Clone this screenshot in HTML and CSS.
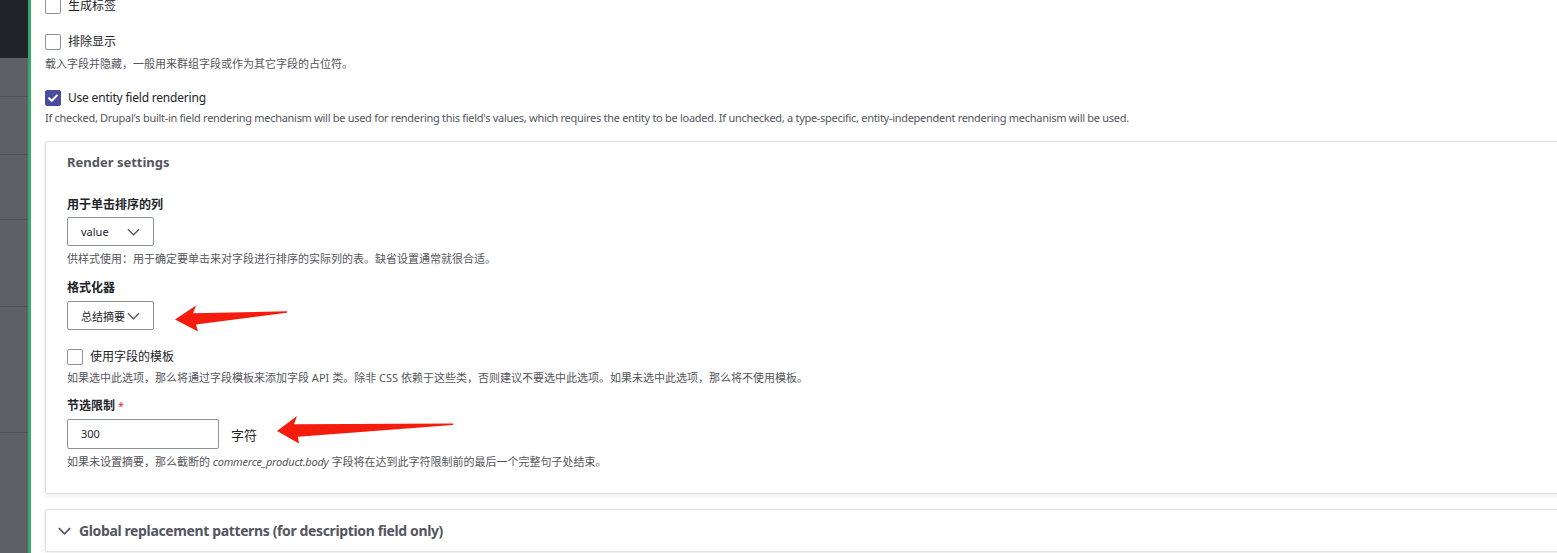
FILE: index.html
```html
<!DOCTYPE html>
<html lang="zh-CN">
<head>
<meta charset="utf-8">
<title>Render settings</title>
<link rel="stylesheet" href="styles.css">
</head>
<body>
<div class="page">
  <aside class="sidebar">
    <div class="sb-top"></div>
    <div class="sb-item h1"></div>
    <div class="sb-item h2"></div>
    <div class="sb-item h3"></div>
    <div class="sb-item h4"></div>
    <div class="sb-item h5"></div>
    <div class="sb-rest"></div>
  </aside>
  <div class="accent"></div>
  <main class="content">
    <div class="check-row first">
      <span class="cb"></span><span class="cb-label">生成标签</span>
    </div>
    <div class="check-row row2">
      <span class="cb"></span><span class="cb-label">排除显示</span>
    </div>
    <div class="desc d1">载入字段并隐藏，一般用来群组字段或作为其它字段的占位符。</div>
    <div class="check-row row3">
      <span class="cb checked"><svg viewBox="0 0 16 16" width="16" height="16"><path d="M4 8.2 L6.8 10.8 L12 5.4" fill="none" stroke="#fff" stroke-width="2" stroke-linecap="round" stroke-linejoin="round"/></svg></span><span class="cb-label latin">Use entity field rendering</span>
    </div>
    <div class="desc d2 latin-desc">If checked, Drupal's built-in field rendering mechanism will be used for rendering this field's values, which requires the entity to be loaded. If unchecked, a type-specific, entity-independent rendering mechanism will be used.</div>

    <section class="panel">
      <h3 class="panel-title">Render settings</h3>

      <div class="label l1">用于单击排序的列</div>
      <div class="select s1"><span>value</span><svg class="chev" viewBox="0 0 14 8" width="13" height="8"><path d="M1 1 L7 7 L13 1" fill="none" stroke="#545560" stroke-width="1.3"/></svg></div>
      <div class="desc pd">供样式使用：用于确定要单击来对字段进行排序的实际列的表。缺省设置通常就很合适。</div>

      <div class="label l2">格式化器</div>
      <div class="select s2"><span>总结摘要</span><svg class="chev" viewBox="0 0 14 8" width="13" height="8"><path d="M1 1 L7 7 L13 1" fill="none" stroke="#545560" stroke-width="1.3"/></svg></div>

      <div class="check-row row4">
        <span class="cb"></span><span class="cb-label">使用字段的模板</span>
      </div>
      <div class="desc pd">如果选中此选项，那么将通过字段模板来添加字段 API 类。除非 CSS 依赖于这些类，否则建议不要选中此选项。如果未选中此选项，那么将不使用模板。</div>

      <div class="label l3">节选限制 <span class="req">*</span></div>
      <div class="input-row">
        <div class="input">300</div>
        <span class="suffix">字符</span>
      </div>
      <div class="desc pd">如果未设置摘要，那么截断的 <em>commerce_product.body</em> 字段将在达到此字符限制前的最后一个完整句子处结束。</div>
    </section>

    <section class="panel panel2">
      <svg class="chev2" viewBox="0 0 14 8" width="13" height="8"><path d="M1 1 L7 7 L13 1" fill="none" stroke="#545560" stroke-width="1.8"/></svg>
      <span class="panel2-title">Global replacement patterns (for description field only)</span>
    </section>
  </main>

  <svg class="arrows" viewBox="0 0 1557 553" width="1557" height="553">
    <polygon points="175,319.5 196,305.5 193,313.3 287,311.2 287,312.8 196,324.5 198,331.5" fill="#f41d0d"/>
    <polygon points="277,431 297,416 294,424.2 453,423.4 453,425 298,436.8 299,443.5" fill="#f41d0d"/>
  </svg>
</div>
</body>
</html>
```

FILE: styles.css
```css
html, body {
  margin: 0;
  padding: 0;
  background: #fff;
  overflow: hidden;
}
body {
  font-family: "Noto Sans", "Noto Sans CJK SC", sans-serif;
  color: #232429;
}
.page {
  position: relative;
  display: flex;
  height: 553px;
  overflow: hidden;
}
.sidebar {
  width: 28px;
  flex: none;
  display: flex;
  flex-direction: column;
  background: #5f6065;
}
.sb-top { height: 58px; background: #232429; }
.sb-item { border-bottom: 1px solid #505156; box-sizing: border-box; }
.h1 { height: 39px; }
.h2 { height: 58px; }
.h3 { height: 65px; }
.h4 { height: 87px; }
.h5 { height: 126px; }
.sb-rest { flex: 1; }
.accent { width: 3px; flex: none; background: #35a96b; }
.content {
  flex: 1;
  min-width: 0;
  padding-left: 14px;
}
.check-row {
  display: flex;
  align-items: center;
  gap: 7px;
  height: 16px;
  font-size: 12px;
  line-height: 16px;
}
.latin { letter-spacing: -0.2px; }
.cb {
  width: 16px;
  height: 16px;
  box-sizing: border-box;
  border: 1px solid #8e929c;
  border-radius: 2px;
  background: #fff;
  flex: none;
  display: flex;
}
.cb.checked {
  background: #4a4c9e;
  border-color: #4a4c9e;
}
.cb.checked svg { margin: -1px; }
.first { margin-top: -2px; }
.row2 { margin-top: 20px; }
.row3 { margin-top: 18px; }
.row4 { margin-top: 19px; }
.desc {
  font-size: 11px;
  line-height: 16px;
  color: #55565b;
  white-space: nowrap;
}
.latin-desc { letter-spacing: -0.29px; }
.desc em { font-style: italic; letter-spacing: -0.2px; }
.d1 { margin-top: 6px; }
.d2 { margin-top: 4px; }
.panel {
  margin-top: 15px;
  margin-right: -20px;
  border: 1px solid #dedfe4;
  border-radius: 2px;
  box-shadow: 0 2px 4px rgba(0, 0, 0, 0.08);
  padding: 10px 0 23px 21px;
}
.panel-title {
  margin: 0;
  font-size: 13px;
  line-height: 20px;
  font-weight: 700;
  color: #545560;
}
.label {
  font-size: 12px;
  line-height: 18px;
  font-weight: 700;
  color: #232429;
}
.l1 { margin-top: 24px; }
.l2 { margin-top: 12px; }
.l3 { margin-top: 11px; }
.req { color: #dc2323; font-size: 10px; vertical-align: top; font-weight: 400; }
.select {
  width: 87px;
  height: 29px;
  box-sizing: border-box;
  border: 1px solid #8e929c;
  border-radius: 2px;
  display: flex;
  align-items: center;
  justify-content: space-between;
  padding: 0 13px 0 13px;
  font-size: 11px;
  color: #232429;
}
.s1 { margin-top: 3px; }
.s2 { margin-top: 4px; }
.pd { margin-top: 5px; }
.input-row {
  margin-top: 4px;
  display: flex;
  align-items: center;
}
.input {
  width: 152px;
  height: 30px;
  box-sizing: border-box;
  border: 1px solid #8e929c;
  border-radius: 2px;
  padding-left: 13px;
  font-size: 11px;
  line-height: 28px;
}
.suffix {
  margin-left: 12px;
  font-size: 13px;
}
.panel2 {
  height: 43px;
  box-sizing: border-box;
  padding: 0 0 0 12px;
  display: flex;
  align-items: center;
  gap: 8px;
}
.panel2-title {
  font-size: 14px;
  font-weight: 700;
  color: #545560;
  letter-spacing: -0.37px;
}
.arrows {
  position: absolute;
  left: 0;
  top: 0;
  pointer-events: none;
}
```
